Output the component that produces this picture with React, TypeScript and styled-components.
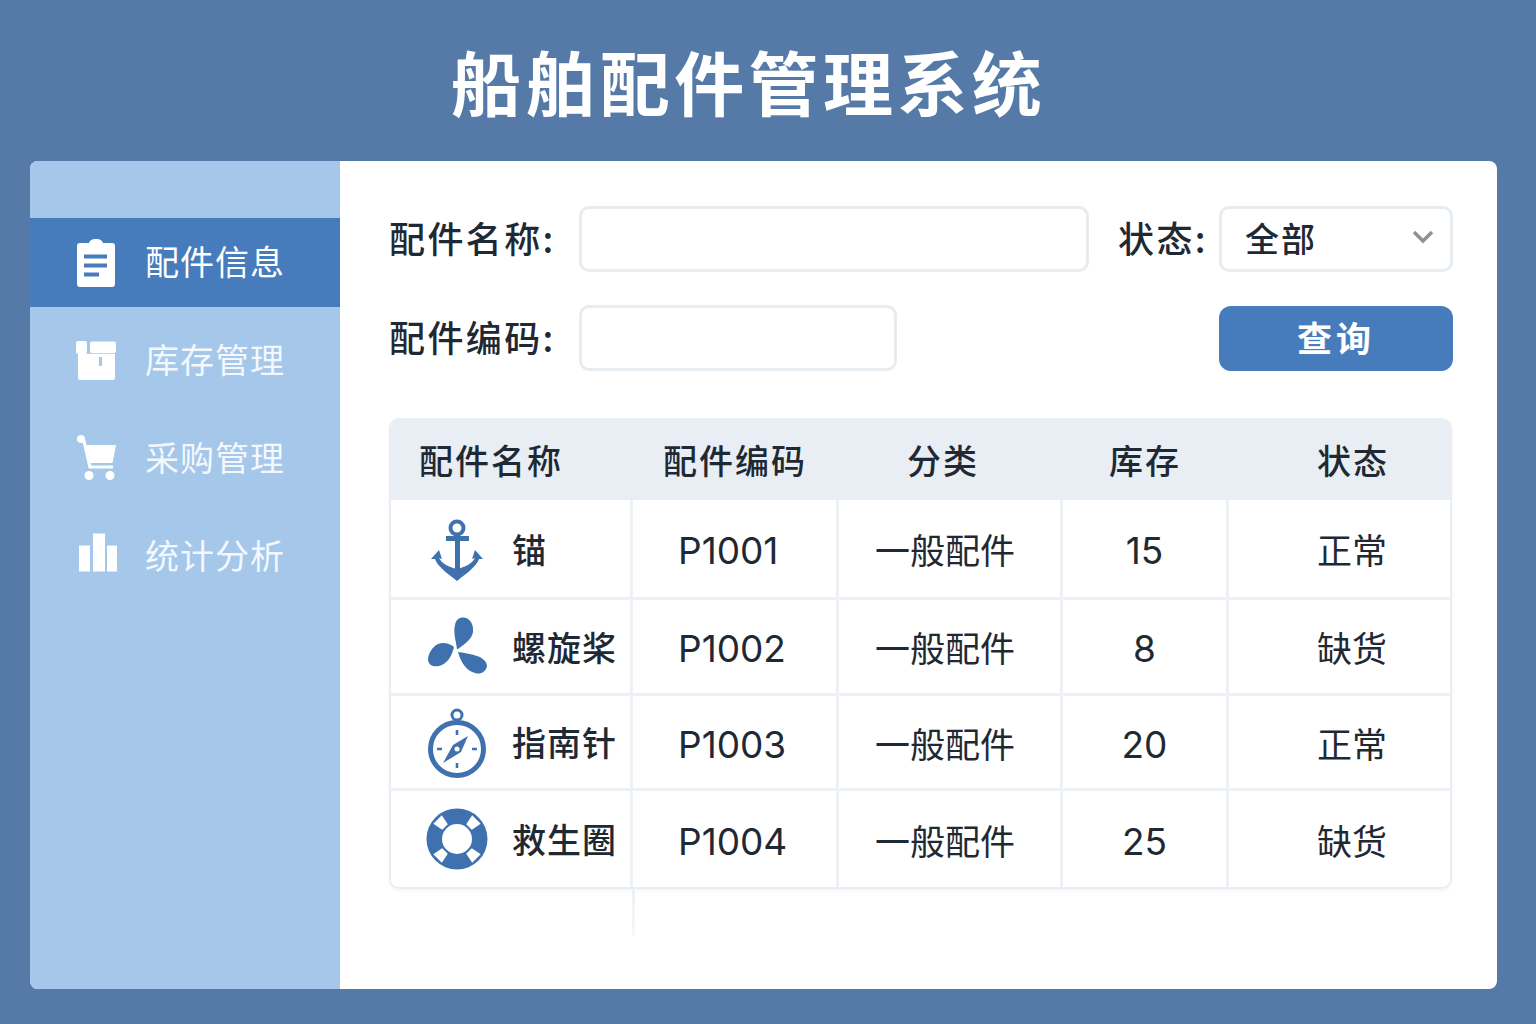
import React from "react";
import styled, { createGlobalStyle } from "styled-components";

const CJK = `"Noto Sans CJK SC", "Noto Sans", sans-serif`;
const LINE = "#e8eef3";
const FIELD = "#e6ecf0";
const SOFT = "#edf1f5";
const BLUE = "#3f71ae";

const Global = createGlobalStyle`
  html, body { margin: 0; padding: 0; background: #567aa8; }
  body { font-family: ${CJK}; }
  * { box-sizing: border-box; }
`;

const Page = styled.div`
  width: 1536px;
  height: 1024px;
  overflow: hidden;
  background: #567aa8;
  padding: 0 39px 0 30px;
`;

const Title = styled.h1`
  margin: 0;
  height: 161px;
  padding: 0 0 0 421px;
  display: flex;
  align-items: center;
  color: #fff;
  font-size: 70px;
  font-weight: 700;
  letter-spacing: 4.4px;
  line-height: 1;
  white-space: nowrap;
`;

const Card = styled.div`
  display: flex;
  width: 1467px;
  height: 828px;
  border-radius: 8px;
  overflow: hidden;
  background: #fff;
`;

const Sidebar = styled.nav`
  width: 310px;
  flex: none;
  background: #a5c7ea;
  padding-top: 57px;
  display: flex;
  flex-direction: column;
  gap: 9px;
`;

const NavItem = styled.div<{ $active?: boolean }>`
  height: 89px;
  display: flex;
  align-items: center;
  gap: 28px;
  padding-left: 45px;
  background: ${(p) => (p.$active ? "#467cbc" : "transparent")};
  color: ${(p) => (p.$active ? "#fff" : "#f3f8fd")};
  font-size: 34px;
  letter-spacing: 1px;
  line-height: 1;
`;

const NavText = styled.span`
  margin-top: -4px;
`;

const NavIcon = styled.svg`
  width: 42px;
  height: 50px;
  flex: none;
`;

const Main = styled.main`
  flex: 1;
  padding: 45px 44px 0 49px;
  color: #1f2933;
`;

const FormRow = styled.div<{ $mb: number }>`
  display: flex;
  align-items: center;
  height: 66px;
  margin-bottom: ${(p) => p.$mb}px;
`;

const Label = styled.label<{ $w: number; $ml?: number }>`
  width: ${(p) => p.$w}px;
  margin-left: ${(p) => p.$ml ?? 0}px;
  padding-bottom: 5px;
  flex: none;
  font-size: 36px;
  font-weight: 500;
  letter-spacing: 2.4px;
  line-height: 1;
  white-space: nowrap;
`;

const Input = styled.input<{ $w: number }>`
  width: ${(p) => p.$w}px;
  height: 66px;
  flex: none;
  border: 3px solid ${FIELD};
  border-radius: 10px;
  background: #fff;
  outline: none;
`;

const Select = styled.div`
  width: 234px;
  height: 66px;
  flex: none;
  display: flex;
  align-items: center;
  justify-content: space-between;
  padding: 0 16px 4px 23px;
  border: 3px solid ${FIELD};
  border-radius: 10px;
  font-size: 34px;
  font-weight: 500;
  letter-spacing: 2px;
`;

const Button = styled.button`
  width: 234px;
  height: 65px;
  flex: none;
  margin-left: auto;
  padding: 0 0 4px;
  border: 0;
  border-radius: 12px;
  background: #467cbc;
  color: #fff;
  font-family: ${CJK};
  font-size: 35px;
  font-weight: 700;
  letter-spacing: 4px;
`;

const Table = styled.div`
  width: 1063px;
  border: 2px solid ${LINE};
  border-radius: 10px;
  overflow: hidden;
  box-shadow: 0 2px 3px rgba(60, 90, 130, 0.06);
`;

const Row = styled.div<{ $h: number; $head?: boolean }>`
  display: grid;
  grid-template-columns: 242px 206px 224px 166px 221px;
  height: ${(p) => p.$h}px;
  background: ${(p) => (p.$head ? LINE : "#fff")};
  border-bottom: ${(p) => (p.$head ? "0" : `3px solid ${SOFT}`)};
  &:last-child { border-bottom: 0; }
`;

const Head = styled.div<{ $pl: number }>`
  display: flex;
  align-items: center;
  padding: 0 0 2px ${(p) => p.$pl}px;
  font-size: 34px;
  font-weight: 500;
  letter-spacing: 2px;
`;

const Cell = styled.div<{ $pl?: number; $center?: boolean }>`
  display: flex;
  align-items: center;
  justify-content: ${(p) => (p.$center ? "center" : "flex-start")};
  padding-left: ${(p) => p.$pl ?? 0}px;
  border-right: 3px solid ${SOFT};
  font-size: 35px;
  line-height: 1;
  white-space: nowrap;
  &:last-child { border-right: 0; }
`;

const NameText = styled.span`
  margin-left: 23px;
  font-size: 34px;
  font-weight: 500;
  letter-spacing: 1px;
`;

const Code = styled.span`
  margin-top: 4px;
  font-family: Inter, "Liberation Sans", sans-serif;
  font-size: 37px;
`;

const PartIcon = styled.svg`
  width: 64px;
  height: 64px;
  flex: none;
  overflow: visible;
`;

const Tail = styled.div`
  width: 3px;
  height: 47px;
  margin-left: 243px;
  background: linear-gradient(${SOFT}, #f6f8fa);
`;

const Chevron = () => (
  <svg width="22" height="14" viewBox="0 0 22 14" fill="none">
    <path d="M2 2l9 9 9-9" stroke="#8c9298" strokeWidth="3.5" />
  </svg>
);

const nav = [
  {
    label: "配件信息",
    active: true,
    icon: (
      <>
        <path fill="#fff" fillRule="evenodd" d="M5 5h9c1-3 3-4 7-4s6 1 7 4h9c2 0 3 1 3 3v38c0 2-1 3-3 3H5c-2 0-3-1-3-3V8c0-2 1-3 3-3z" />
        <path fill="#467cbc" d="M9 16.5h23v4H9zM9 25.5h23v4H9zM9 34.5h15v4H9z" />
      </>
    ),
  },
  {
    label: "库存管理",
    icon: (
      <>
        <rect x="1" y="5" width="11" height="13" rx="2" fill="#fff" />
        <rect x="15" y="5.5" width="26" height="11.5" rx="2" fill="#fff" />
        <path fill="#fff" fillRule="evenodd" d="M3 17.8h37V42c0 1-1 2-2 2H5c-1 0-2-1-2-2zM24 21v9h3v-9z" />
      </>
    ),
  },
  {
    label: "采购管理",
    icon: (
      <>
        <circle cx="6" cy="5" r="4" fill="#fff" />
        <path d="M6 5l3 2 6 26h23" fill="none" stroke="#fff" strokeWidth="3.2" />
        <path fill="#fff" d="M11 11h30l-3.5 18H15z" />
        <circle cx="14" cy="41.5" r="4.5" fill="#fff" />
        <circle cx="35" cy="41.5" r="4.5" fill="#fff" />
      </>
    ),
  },
  {
    label: "统计分析",
    icon: <path fill="#fff" d="M4 13.5h11v26H4zM18 1.5h12v38H18zM32 13.5h11v26H32z" />,
  },
];

const Anchor = () => (
  <PartIcon viewBox="0 0 64 64">
    <circle cx="32" cy="11" r="6.5" fill="none" stroke={BLUE} strokeWidth="4" />
    <path fill={BLUE} d="M21 19h9v-3h5v3h9v5h-9v30l-3 1-2-1V24h-9z" />
    <path fill={BLUE} d="M6 42l8-9 3 9-3-1c3 6 10 9 18 11 8-2 15-5 18-11l-3 1 3-9 8 9-4 0c-3 8-12 14-22 22-10-8-19-14-22-22z" />
  </PartIcon>
);

const Propeller = () => (
  <PartIcon viewBox="0 0 64 64">
    <path fill={BLUE} d="M32 34C31 26 28 17 30 10 31 4 35 2 39 2.5 45 3 49 10 48 17 47 25 38 30 33 34z" />
    <path fill={BLUE} d="M29 32C24 28 18 27 13 29 7 32 3 39 3 45 4 51 9 52 14 51 22 49 27 41 29 32z" />
    <path fill={BLUE} d="M33 37C40 38 47 39 52 41 58 43 62 47 62 51 61 56 57 59 52 58.5 42 57 36 48 33 37z" />
  </PartIcon>
);

const Compass = () => (
  <PartIcon viewBox="0 0 64 64">
    <circle cx="32" cy="5" r="5" fill="none" stroke={BLUE} strokeWidth="3" />
    <circle cx="32" cy="39" r="26.5" fill="#fff" stroke={BLUE} strokeWidth="5" />
    <path fill={BLUE} d="M30.7 20h2.6v5h-2.6zM30.7 53h2.6v5h-2.6zM12 37.7h5v2.6h-5zM47 37.7h5v2.6h-5z" />
    <path fill={BLUE} d="M43 26L36 42 28 35zM18 53L28 35 36 42z" />
    <circle cx="32" cy="39" r="2.5" fill="#fff" />
  </PartIcon>
);

const Band = ({ angle }: { angle: number }) => (
  <polygon
    fill="#fff"
    points="16.8,8.3 22.8,17.2 17.2,22.8 8.3,16.8"
    transform={`rotate(${angle} 32 32)`}
  />
);

const Lifebuoy = () => (
  <PartIcon viewBox="0 0 64 64">
    <circle cx="32" cy="32" r="30.5" fill={BLUE} />
    <Band angle={0} />
    <Band angle={90} />
    <Band angle={180} />
    <Band angle={270} />
    <circle cx="32" cy="32" r="15" fill="#fff" />
  </PartIcon>
);

const rows = [
  { h: 100, name: "锚", icon: <Anchor />, code: "P1001", stock: "15", status: "正常" },
  { h: 96, name: "螺旋桨", icon: <Propeller />, code: "P1002", stock: "8", status: "缺货" },
  { h: 95, name: "指南针", icon: <Compass />, code: "P1003", stock: "20", status: "正常" },
  { h: 96, name: "救生圈", icon: <Lifebuoy />, code: "P1004", stock: "25", status: "缺货" },
];

export default function App() {
  return (
    <Page>
      <Global />
      <Title>船舶配件管理系统</Title>
      <Card>
        <Sidebar>
          {nav.map((n) => (
            <NavItem key={n.label} $active={n.active}>
              <NavIcon viewBox="0 0 42 50">{n.icon}</NavIcon>
              <NavText>{n.label}</NavText>
            </NavItem>
          ))}
        </Sidebar>
        <Main>
          <FormRow $mb={33}>
            <Label $w={190}>配件名称:</Label>
            <Input $w={510} />
            <Label $w={101} $ml={29}>状态:</Label>
            <Select>
              <span>全部</span>
              <Chevron />
            </Select>
          </FormRow>
          <FormRow $mb={47}>
            <Label $w={190}>配件编码:</Label>
            <Input $w={318} />
            <Button>查询</Button>
          </FormRow>
          <Table>
            <Row $h={80} $head>
              <Head $pl={28}>配件名称</Head>
              <Head $pl={30}>配件编码</Head>
              <Head $pl={68}>分类</Head>
              <Head $pl={46}>库存</Head>
              <Head $pl={88}>状态</Head>
            </Row>
            {rows.map((r) => (
              <Row key={r.code} $h={r.h}>
                <Cell $pl={34}>
                  {r.icon}
                  <NameText>{r.name}</NameText>
                </Cell>
                <Cell $pl={45}><Code>{r.code}</Code></Cell>
                <Cell $pl={36}>一般配件</Cell>
                <Cell $center><Code>{r.stock}</Code></Cell>
                <Cell $pl={88}>{r.status}</Cell>
              </Row>
            ))}
          </Table>
          <Tail />
        </Main>
      </Card>
    </Page>
  );
}
